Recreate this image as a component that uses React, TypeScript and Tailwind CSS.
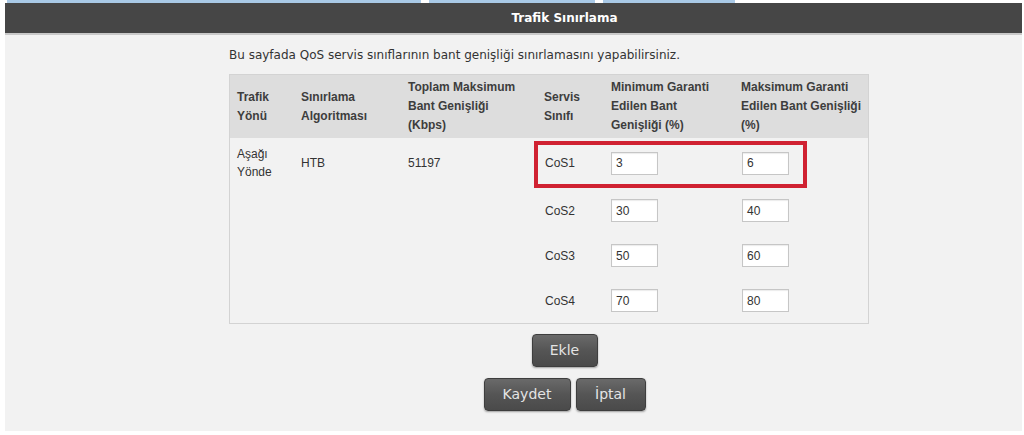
const rows = [
  { cos: "CoS1", min: "3", max: "6" },
  { cos: "CoS2", min: "30", max: "40" },
  { cos: "CoS3", min: "50", max: "60" },
  { cos: "CoS4", min: "70", max: "80" },
];

function Field({ value }: { value: string }) {
  return (
    <div className="w-[47px] h-[23px] bg-white border border-[#c6c6c6] shadow-[inset_0_1px_1px_rgba(0,0,0,0.08)] pl-[4px] flex items-center text-[12px] text-[#333]">
      {value}
    </div>
  );
}

function DarkButton({ label, w }: { label: string; w: string }) {
  return (
    <button
      className={`${w} h-[33px] rounded-[4px] border border-[#3e3e3e] bg-gradient-to-b from-[#6a6a6a] via-[#555555] to-[#4a4a4a] shadow-[0_1px_2px_rgba(0,0,0,0.35)] text-[14px] text-[#e4e4e4] font-[family-name:DejaVu_Sans,sans-serif]`}
    >
      {label}
    </button>
  );
}

export default function App() {
  return (
    <div className="w-[1024px] h-[435px] bg-white overflow-hidden font-[family-name:Liberation_Sans,Arial,sans-serif] text-[#333]">
      <div className="h-[3px] flex">
        <div className="ml-[7px] w-[414px] bg-[#a9c9e6]" />
        <div className="ml-[8px] w-[166px] bg-[#a9c9e6]" />
        <div className="ml-[8px] w-[132px] bg-[#a9c9e6]" />
      </div>

      <div className="ml-[5px] w-[1017px]">
        <div className="h-[30px] bg-[#464646] flex items-center justify-center pl-[102px]">
          <span className="text-white font-bold text-[12px] font-[family-name:DejaVu_Sans,sans-serif]">Trafik Sınırlama</span>
        </div>
        <div className="h-[2px] bg-[#c9c9c9]" />

        <div className="h-[396px] bg-[#f2f2f2] pt-[13px]">
          <p className="ml-[224px] text-[12px] leading-[14px] font-[family-name:DejaVu_Sans,sans-serif] text-[#333]">
            Bu sayfada QoS servis sınıflarının bant genişliği sınırlamasını yapabilirsiniz.
          </p>

          <div className="ml-[224px] mt-[12px] w-[640px] border border-[#d3d3d3]">
            <div className="grid grid-cols-[63px_107px_136px_67px_130px_135px] h-[63px] bg-[#dddddd] items-center text-[12px] leading-[19px] font-bold text-[#3d3d3d] whitespace-nowrap">
              <div className="pl-[7px]">Trafik<br />Yönü</div>
              <div className="pl-[8px]">Sınırlama<br />Algoritması</div>
              <div className="pl-[8px]">Toplam Maksimum<br />Bant Genişliği<br />(Kbps)</div>
              <div className="pl-[8px]">Servis<br />Sınıfı</div>
              <div className="pl-[8px]">Minimum Garanti<br />Edilen Bant<br />Genişliği (%)</div>
              <div className="pl-[8px]">Maksimum Garanti<br />Edilen Bant Genişliği<br />(%)</div>
            </div>

            {rows.map((r, i) => (
              <div
                key={r.cos}
                className={`relative grid grid-cols-[63px_107px_136px_67px_130px_135px] items-center text-[12px] text-[#333] ${i === 0 ? "h-[50px]" : "h-[45px]"}`}
              >
                <div className="pl-[7px] leading-[18px]">{i === 0 && <>Aşağı<br />Yönde</>}</div>
                <div className="pl-[8px]">{i === 0 && "HTB"}</div>
                <div className="pl-[8px]">{i === 0 && "51197"}</div>
                <div className="pl-[9px]">{r.cos}</div>
                <div className="pl-[8px]"><Field value={r.min} /></div>
                <div className="pl-[9px]"><Field value={r.max} /></div>
                {i === 0 && (
                  <div className="absolute left-[304px] top-[3px] w-[273px] h-[47px] border-[4px] border-[#d02232]" />
                )}
              </div>
            ))}
          </div>

          <div className="pl-[102px] mt-[10px] flex flex-col items-center gap-[11px]">
            <DarkButton label="Ekle" w="w-[66px]" />
            <div className="flex gap-[5px]">
              <DarkButton label="Kaydet" w="w-[87px]" />
              <DarkButton label="İptal" w="w-[70px]" />
            </div>
          </div>
        </div>
      </div>
    </div>
  );
}
